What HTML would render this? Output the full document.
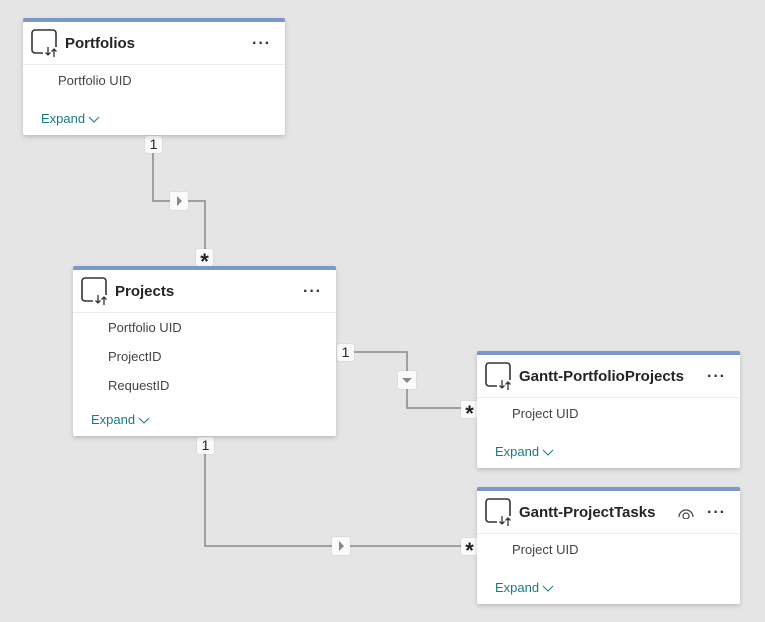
<!DOCTYPE html>
<html><head><style>
body{margin:0;width:765px;height:622px;background:#e5e5e5;position:relative;overflow:hidden;font-family:"Liberation Sans",sans-serif}
.card{position:absolute;background:#fff;border-top:4px solid #7a98cc;box-shadow:0 2px 5px rgba(0,0,0,.18);border-radius:2px}
.hd{position:absolute;left:0;right:0;top:0;height:42px;border-bottom:1px solid #ececec}
.ic{position:absolute;left:8px;top:7px}
.tt{position:absolute;left:42px;top:13px;font-size:15px;font-weight:bold;color:#252423}
.dots{position:absolute;right:14px;top:17px;font-size:16px;font-weight:bold;color:#333;letter-spacing:1px;line-height:10px}
.f{position:absolute;left:35px;font-size:13px;color:#444}
.ex{position:absolute;left:18px;font-size:13px;color:#1a7a80}
.ex svg{vertical-align:middle;margin-left:3px}
.lb{position:absolute;background:#fafafa;border-radius:2px;box-shadow:0 0 1px rgba(0,0,0,.25);font-size:14px;text-align:center;line-height:17px;color:#222}
.st{font-size:22px;line-height:26px;font-weight:bold}
svg.ln{position:absolute;left:0;top:0}
</style></head><body>
<svg class="ln" width="765" height="622"><g stroke="#888" stroke-width="1.5" fill="none">
<path d="M153 150V201H205V258"/>
<path d="M352 352H407V408H470"/>
<path d="M205 452V546H470"/>
</g></svg>

<div class="lb" style="left:145px;top:136px;width:17px;height:17px">1</div>
<div class="lb" style="left:170px;top:192px;width:18px;height:18px"><svg width="18" height="18"><path d="M7 4L12 9L7 14Z" fill="#888"/></svg></div>
<div class="lb st" style="left:196px;top:249px;width:17px;height:17px">*</div>

<div class="lb" style="left:337px;top:344px;width:17px;height:17px">1</div>
<div class="lb" style="left:398px;top:371px;width:18px;height:18px"><svg width="18" height="18"><path d="M4 7L14 7L9 12Z" fill="#888"/></svg></div>
<div class="lb st" style="left:461px;top:401px;width:17px;height:17px">*</div>

<div class="lb" style="left:197px;top:437px;width:17px;height:17px">1</div>
<div class="lb" style="left:332px;top:537px;width:18px;height:18px"><svg width="18" height="18"><path d="M7 4L12 9L7 14Z" fill="#888"/></svg></div>
<div class="lb st" style="left:461px;top:538px;width:17px;height:17px">*</div>

<div class="card" style="left:23px;top:18px;width:262px;height:113px">
 <div class="hd"><svg class="ic" width="30" height="30"><path d="M12 24H4a3 3 0 0 1-3-3V4a3 3 0 0 1 3-3h18a3 3 0 0 1 3 3v14" stroke="#333" stroke-width="1.6" fill="none"/><path d="M17 18v8M14.5 23.5L17 26L19.5 23.5M23 28v-8M20.5 22.5L23 20L25.5 22.5" stroke="#333" stroke-width="1.3" fill="none"/></svg><div class="tt">Portfolios</div><div class="dots">···</div></div>
 <div class="f" style="top:51px">Portfolio UID</div>
 <div class="ex" style="top:89px">Expand<svg width="12" height="8"><path d="M1 1L6 6L11 1" stroke="#1a7a80" fill="none"/></svg></div>
</div>

<div class="card" style="left:73px;top:266px;width:263px;height:166px">
 <div class="hd"><svg class="ic" width="30" height="30"><path d="M12 24H4a3 3 0 0 1-3-3V4a3 3 0 0 1 3-3h18a3 3 0 0 1 3 3v14" stroke="#333" stroke-width="1.6" fill="none"/><path d="M17 18v8M14.5 23.5L17 26L19.5 23.5M23 28v-8M20.5 22.5L23 20L25.5 22.5" stroke="#333" stroke-width="1.3" fill="none"/></svg><div class="tt">Projects</div><div class="dots">···</div></div>
 <div class="f" style="top:50px">Portfolio UID</div>
 <div class="f" style="top:79px">ProjectID</div>
 <div class="f" style="top:108px">RequestID</div>
 <div class="ex" style="top:142px">Expand<svg width="12" height="8"><path d="M1 1L6 6L11 1" stroke="#1a7a80" fill="none"/></svg></div>
</div>

<div class="card" style="left:477px;top:351px;width:263px;height:113px">
 <div class="hd"><svg class="ic" width="30" height="30"><path d="M12 24H4a3 3 0 0 1-3-3V4a3 3 0 0 1 3-3h18a3 3 0 0 1 3 3v14" stroke="#333" stroke-width="1.6" fill="none"/><path d="M17 18v8M14.5 23.5L17 26L19.5 23.5M23 28v-8M20.5 22.5L23 20L25.5 22.5" stroke="#333" stroke-width="1.3" fill="none"/></svg><div class="tt">Gantt-PortfolioProjects</div><div class="dots">···</div></div>
 <div class="f" style="top:51px">Project UID</div>
 <div class="ex" style="top:89px">Expand<svg width="12" height="8"><path d="M1 1L6 6L11 1" stroke="#1a7a80" fill="none"/></svg></div>
</div>

<div class="card" style="left:477px;top:487px;width:263px;height:113px">
 <div class="hd"><svg class="ic" width="30" height="30"><path d="M12 24H4a3 3 0 0 1-3-3V4a3 3 0 0 1 3-3h18a3 3 0 0 1 3 3v14" stroke="#333" stroke-width="1.6" fill="none"/><path d="M17 18v8M14.5 23.5L17 26L19.5 23.5M23 28v-8M20.5 22.5L23 20L25.5 22.5" stroke="#333" stroke-width="1.3" fill="none"/></svg><div class="tt">Gantt-ProjectTasks</div>
 <svg style="position:absolute;left:200px;top:16px" width="18" height="12"><path d="M2 10a7 7 0 0 1 14 0" stroke="#444" fill="none" stroke-width="1.2"/><circle cx="9" cy="9" r="3" stroke="#444" fill="none" stroke-width="1.2"/></svg>
 <div class="dots">···</div></div>
 <div class="f" style="top:51px">Project UID</div>
 <div class="ex" style="top:89px">Expand<svg width="12" height="8"><path d="M1 1L6 6L11 1" stroke="#1a7a80" fill="none"/></svg></div>
</div>
</body></html>
